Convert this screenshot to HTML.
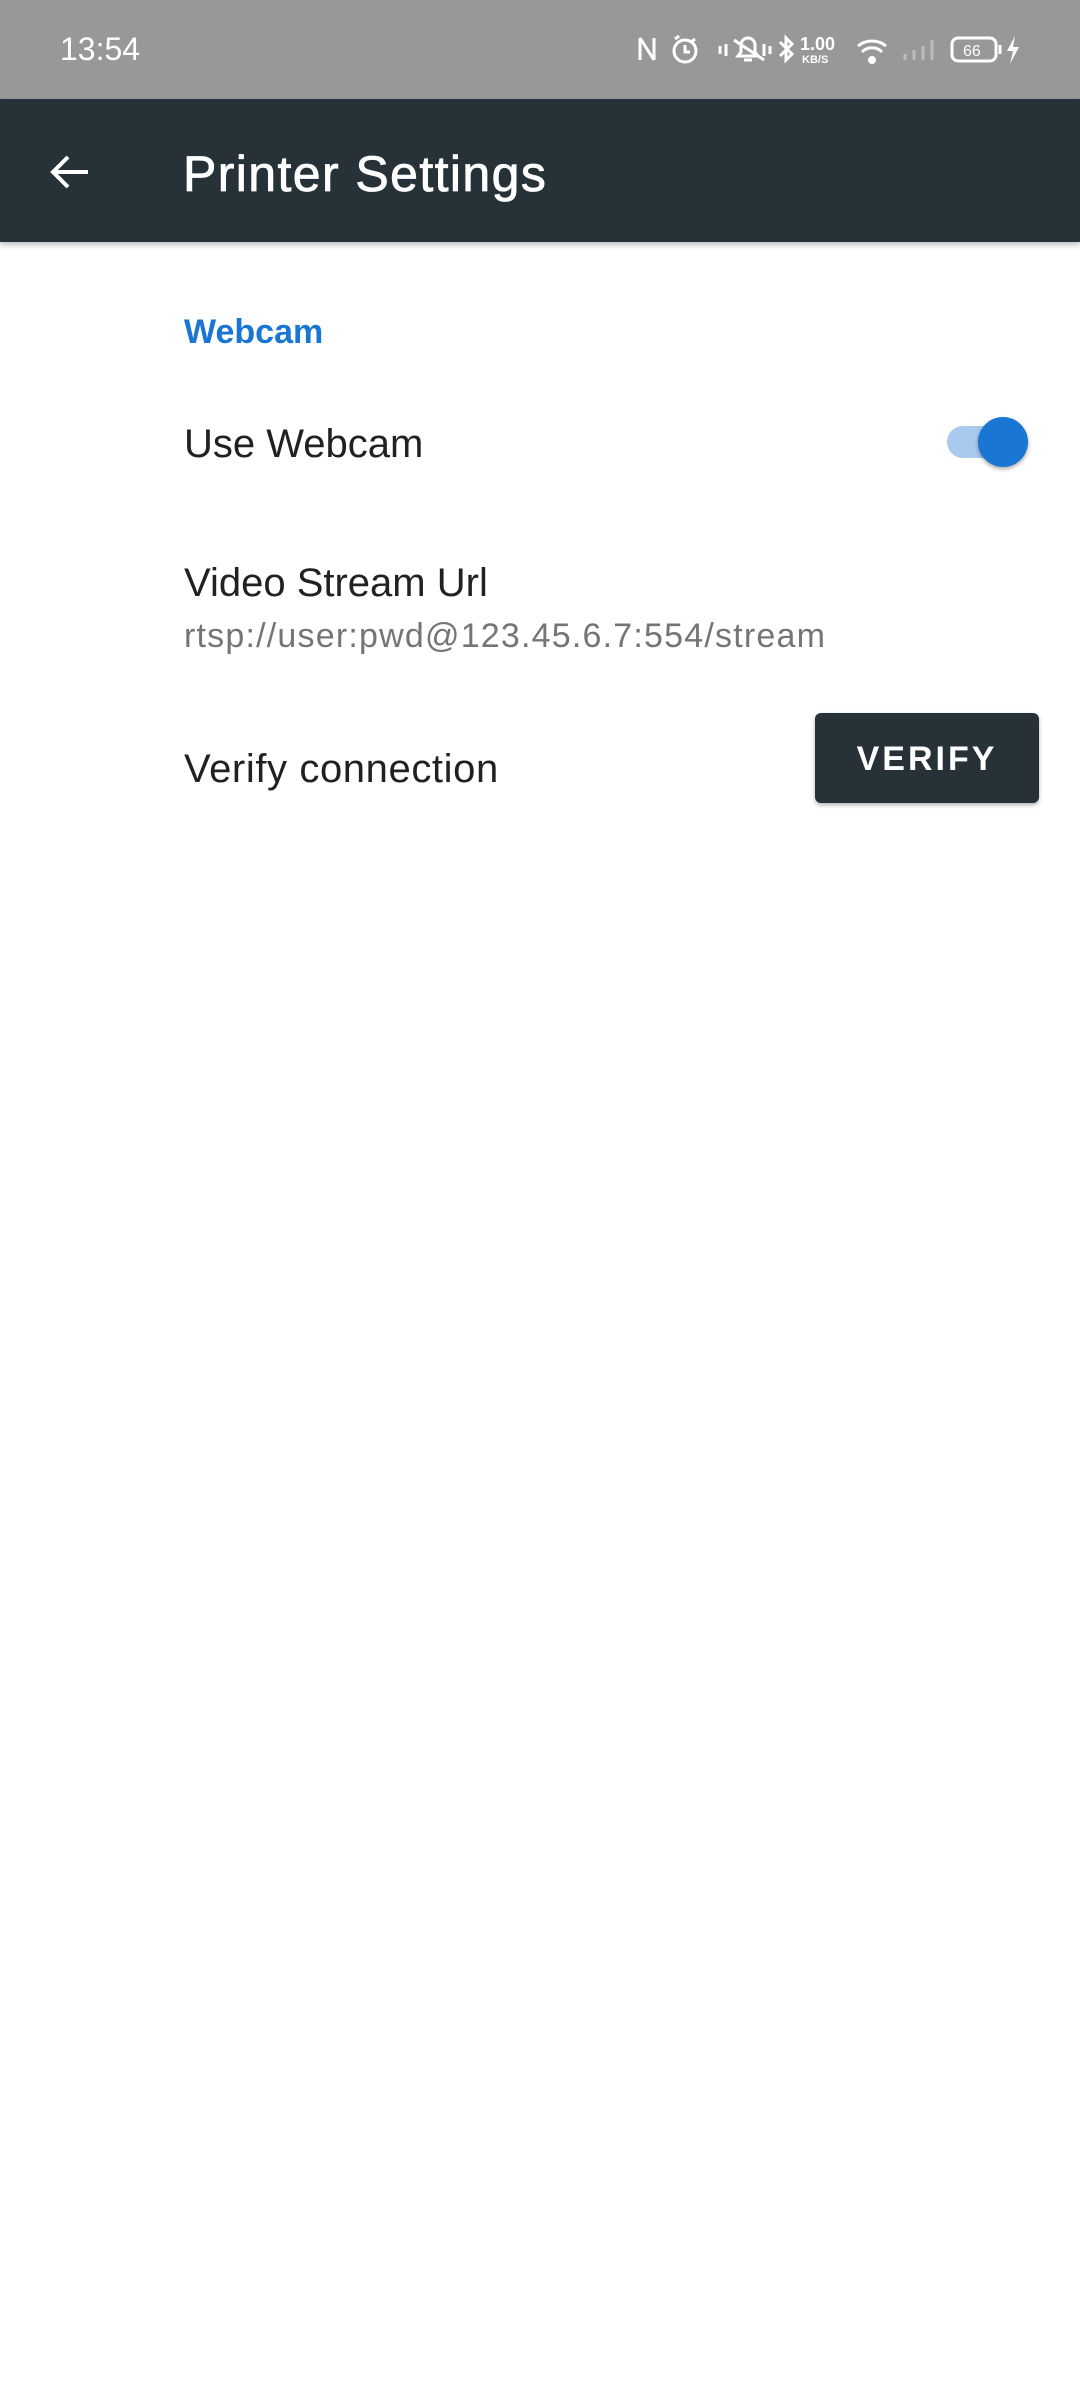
<!DOCTYPE html>
<html><head><meta charset="utf-8"><style>
body{margin:0;width:1080px;height:2400px;background:#fff;font-family:"Liberation Sans",sans-serif;position:relative;overflow:hidden}
.a{position:absolute;white-space:nowrap}
</style></head><body>
<div class="a" style="left:0;top:0;width:1080px;height:99px;background:#989898"></div>
<div class="a" style="left:60px;top:31px;font-size:32px;color:#fff">13:54</div>
<svg class="a" style="left:630px;top:30px" width="400" height="40" viewBox="0 0 400 40" fill="none" stroke="#fff" stroke-width="3">
<path d="M10 8v22M10 8l14 22M24 8v22"/>
<circle cx="55" cy="21" r="11"/><path d="M55 15v7h5M45 9l4-3M65 9l-4 3"/>
<path d="M90 16v8M96 14v12M108 26h20l-3-4v-7a7 7 0 0 0-14 0v7zM114 30h8M134 14v12M140 16v8M104 10l30 20"/>
<path d="M150 12l12 12-6 6V8l6 6-12 12"/>
<text x="170" y="20" fill="#fff" stroke="none" font-size="18" font-weight="bold" font-family="Liberation Sans">1.00</text>
<text x="172" y="33" fill="#fff" stroke="none" font-size="11" font-weight="bold" font-family="Liberation Sans">KB/S</text>
<path d="M228 16a22 22 0 0 1 28 0M232 22a14 14 0 0 1 20 0"/><circle cx="242" cy="30" r="2.5" fill="#fff"/>
<path d="M275 30v-6M284 30v-10M293 30v-14M302 30v-20" stroke="#bbb"/>
<rect x="322" y="8" width="44" height="23" rx="6"/><text x="333" y="26" fill="#fff" stroke="none" font-size="16" font-family="Liberation Sans">66</text>
<path d="M370 15v9"/><path d="M385 6l-8 15h6l-3 13 9-17h-6z" fill="#fff" stroke="none"/>
</svg>
<div class="a" style="left:0;top:99px;width:1080px;height:143px;background:#263238;box-shadow:0 3px 5px rgba(0,0,0,.25)"></div>
<svg class="a" style="left:48px;top:150px" width="44" height="44" viewBox="0 0 44 44" fill="none" stroke="#fff" stroke-width="4"><path d="M40 22H6M20 7L5 22l15 15"/></svg>
<div class="a" style="left:183px;top:145px;font-size:50px;color:#fff;letter-spacing:1.4px;-webkit-text-stroke:0.8px #fff">Printer Settings</div>
<div class="a" style="left:184px;top:313px;font-size:34px;color:#1976d2;font-weight:bold">Webcam</div>
<div class="a" style="left:184px;top:422px;font-size:40px;color:#212121">Use Webcam</div>
<div class="a" style="left:947px;top:426px;width:74px;height:32px;border-radius:16px;background:#a9c9ee"></div>
<div class="a" style="left:978px;top:417px;width:50px;height:50px;border-radius:50%;background:#1976d2;box-shadow:0 2px 4px rgba(0,0,0,.35)"></div>
<div class="a" style="left:184px;top:561px;font-size:40px;color:#212121">Video Stream Url</div>
<div class="a" style="left:184px;top:617px;font-size:34px;color:#757575;letter-spacing:1.2px">rtsp://user:pwd@123.45.6.7:554/stream</div>
<div class="a" style="left:184px;top:747px;font-size:40px;color:#212121;letter-spacing:0.6px">Verify connection</div>
<div class="a" style="left:815px;top:713px;width:224px;height:90px;border-radius:6px;background:#263238;box-shadow:0 2px 4px rgba(0,0,0,.3);color:#fff;font-size:34px;font-weight:bold;letter-spacing:3px;text-align:center;line-height:92px">VERIFY</div>
</body></html>
